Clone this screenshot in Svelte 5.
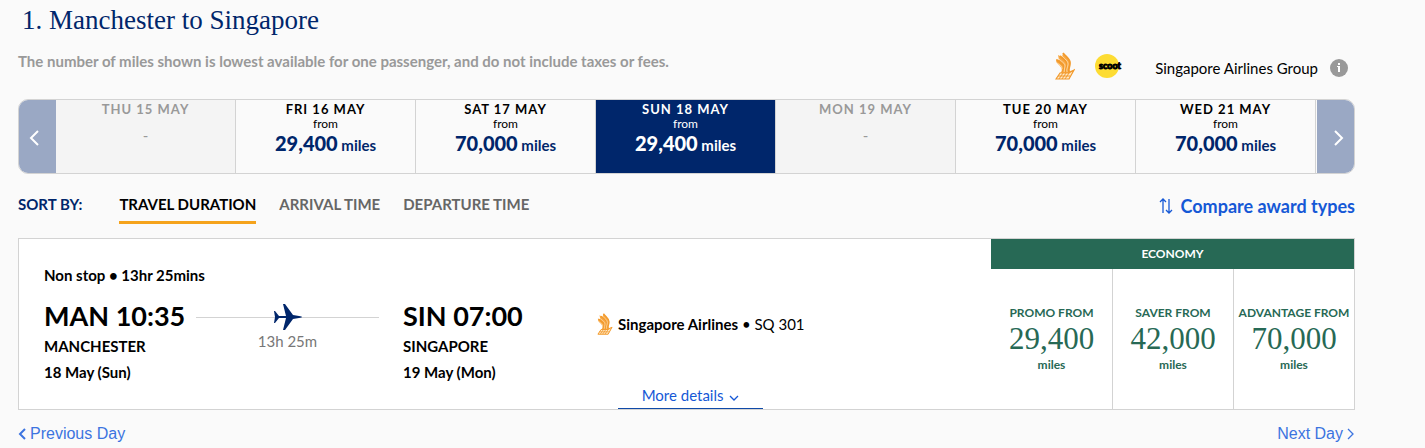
<script>
    let selectedDay = $state(3);
    let sortBy = $state('TRAVEL DURATION');

    const days = [
        { date: 'THU 15 MAY', miles: null },
        { date: 'FRI 16 MAY', miles: '29,400' },
        { date: 'SAT 17 MAY', miles: '70,000' },
        { date: 'SUN 18 MAY', miles: '29,400' },
        { date: 'MON 19 MAY', miles: null },
        { date: 'TUE 20 MAY', miles: '70,000' },
        { date: 'WED 21 MAY', miles: '70,000' }
    ];

    const sortOptions = ['TRAVEL DURATION', 'ARRIVAL TIME', 'DEPARTURE TIME'];

    const fares = [
        { name: 'PROMO FROM', miles: '29,400' },
        { name: 'SAVER FROM', miles: '42,000' },
        { name: 'ADVANTAGE FROM', miles: '70,000' }
    ];
</script>

{#snippet bird()}
    <svg class="bird" viewBox="0 0 20 28" aria-hidden="true">
        <path fill="#f7a845" d="M8 1C11 5 15 7 15 11c0 4-2 6 0 8l4-1-5 9H1l5-7c2-2 0-5-2-7-3-2-3-4-3-6l3 1-1-5 4 2z" />
        <path fill="none" stroke="#f29a2c" stroke-width="1.8" d="M8 1c3 4 7 6 7 10 0 4-2 6-1 9M5 4c4 4 7 5 7 8 0 3-2 5-1 8M2 8c4 4 7 4 7 7 0 2-1 3-1 5" />
        <path fill="none" stroke="#ffe9c8" stroke-width="0.7" d="M7 4c3 3 6 5 6 8s-2 5-1 8M4 7c3 3 6 4 6 7 0 2-1 4-1 6M2 11c3 2 5 3 5 6" />
        <path fill="#ffe9c8" stroke="#f29a2c" stroke-width="1.2" d="M5 21h9l5-3-5 9H1z" />
        <path fill="none" stroke="#f29a2c" stroke-width="1" d="M8 21l-4 6M11 21l-4 6M14 21l-4 6M3 24h12" />
    </svg>
{/snippet}

<main>
    <header>
        <div>
            <h1>1. Manchester to Singapore</h1>
            <p class="note">The number of miles shown is lowest available for one passenger, and do not include taxes or fees.</p>
        </div>
        <div class="group">
            <div class="logos">
                {@render bird()}
                <svg class="scoot" viewBox="0 0 28 24" role="img" aria-label="Scoot">
                    <circle cx="12" cy="12" r="12" fill="#fddc33" />
                    <text x="15" y="15" text-anchor="middle">scoot</text>
                </svg>
            </div>
            <span>Singapore Airlines Group</span>
            <button class="info" aria-label="Information">
                <svg viewBox="0 0 18 18" aria-hidden="true">
                    <circle cx="9" cy="9" r="9" fill="#999" />
                    <path fill="#fff" d="M8 4h2v2H8zM7 7h3v6H8V8H7z" />
                </svg>
            </button>
        </div>
    </header>

    <nav class="days" aria-label="Departure date">
        <button class="arrow" aria-label="Earlier dates">
            <svg viewBox="0 0 10 16" aria-hidden="true"><path d="M9 1L2 8l7 7" /></svg>
        </button>
        {#each days as day, i}
            <button
                class="day"
                class:selected={selectedDay === i}
                disabled={!day.miles}
                onclick={() => (selectedDay = i)}
            >
                <span class="date">{day.date}</span>
                {#if day.miles}
                    <span class="from">from</span>
                    <span class="miles"><strong>{day.miles}</strong> miles</span>
                {:else}
                    <span class="none">-</span>
                {/if}
            </button>
        {/each}
        <button class="arrow next" aria-label="Later dates">
            <svg viewBox="0 0 10 16" aria-hidden="true"><path d="M1 1l7 7-7 7" /></svg>
        </button>
    </nav>

    <div class="sort">
        <span class="sort-label">SORT BY:</span>
        {#each sortOptions as option}
            <button class="sort-option" class:active={sortBy === option} onclick={() => (sortBy = option)}>{option}</button>
        {/each}
        <a class="compare" href="#compare">
            <svg viewBox="0 0 14 16" aria-hidden="true"><path d="M4 15V1M1 4l3-3 3 3M10 1v14M7 12l3 3 3-3" /></svg>
            Compare award types
        </a>
    </div>

    <section class="card">
        <div class="flight">
            <div class="journey">
                <p class="summary">Non stop • 13hr 25mins</p>
                <div class="legs">
                    <div>
                        <div class="time">MAN 10:35</div>
                        <div class="place">MANCHESTER</div>
                        <div class="place">18 May (Sun)</div>
                    </div>
                    <div class="duration">
                        <div class="line">
                            <svg viewBox="0 0 28 26" aria-hidden="true">
                                <path fill="#00266b" d="M0 7h1l4 5h7L9 0h2l8 11 6 1c2 0 3 1 3 1s-1 1-3 1l-6 1-8 11H9l3-12H5l-4 5H0l1-6z" />
                            </svg>
                        </div>
                        <span>13h 25m</span>
                    </div>
                    <div>
                        <div class="time">SIN 07:00</div>
                        <div class="place">SINGAPORE</div>
                        <div class="place">19 May (Mon)</div>
                    </div>
                </div>
            </div>
            <div class="carrier">
                <p>{@render bird()}<span><strong>Singapore Airlines</strong> • SQ 301</span></p>
                <button class="details">
                    More details
                    <svg viewBox="0 0 10 6" aria-hidden="true"><path d="M1 1l4 4 4-4" /></svg>
                </button>
            </div>
        </div>
        <div class="fares">
            <h2>ECONOMY</h2>
            {#each fares as fare}
                <button class="fare">
                    <span>{fare.name}</span>
                    <span class="amount">{fare.miles}</span>
                    <span>miles</span>
                </button>
            {/each}
        </div>
    </section>

    <footer>
        <a href="#previous"><svg viewBox="0 0 8 12" aria-hidden="true"><path d="M7 1L2 6l5 5" /></svg>Previous Day</a>
        <a href="#next">Next Day<svg class="thin" viewBox="0 0 8 12" aria-hidden="true"><path d="M1 1l5 5-5 5" /></svg></a>
    </footer>
</main>

<style>
    :global(body) {
        background: #fafafa;
    }

    main {
        padding: 0 70px 0 18px;
        font-family: Lato, sans-serif;
        font-size: 15px;
        line-height: 20px;
        color: #000;
    }

    h1, h2, p {
        margin: 0;
    }

    button {
        padding: 0;
        border: 0;
        background: none;
        font: inherit;
        color: inherit;
        cursor: pointer;
    }

    a {
        color: #1558d6;
        text-decoration: none;
    }

    svg {
        flex: none;
    }

    svg path:not([fill]) {
        fill: none;
        stroke: currentColor;
        stroke-width: 2;
    }

    header {
        display: flex;
        justify-content: space-between;
        align-items: flex-end;
        height: 84px;
        margin-bottom: 15px;
    }

    h1 {
        margin-bottom: 11px;
        padding-left: 4px;
        font: 27px/40px "Liberation Serif", serif;
        color: #00266b;
    }

    .note {
        margin-bottom: 13px;
        font-weight: bold;
        color: #999;
    }

    .group {
        display: flex;
        align-items: center;
        padding-right: 7px;
    }

    .logos {
        display: flex;
        align-items: center;
        gap: 20px;
        margin-right: 32px;
        padding-bottom: 4px;
    }

    .bird {
        width: 20px;
        height: 28px;
    }

    .scoot {
        width: 28px;
        height: 24px;
    }

    .scoot text {
        font: bold 9px Lato, sans-serif;
        stroke: #000;
    }

    .info {
        display: flex;
        margin-left: 12px;
    }

    .info svg {
        width: 18px;
        height: 18px;
    }

    .days {
        display: flex;
        height: 73px;
        border: 1px solid #d3d3d3;
        border-radius: 10px;
        overflow: hidden;
    }

    .arrow {
        width: 37px;
        padding: 6px 8px 0 0;
        background: #9aa8c4;
        color: #fff;
    }

    .arrow svg {
        width: 10px;
        height: 16px;
    }

    .arrow.next {
        margin-left: 1px;
        padding: 6px 0 0 6px;
    }

    .day {
        display: flex;
        flex: 1;
        flex-direction: column;
        align-items: center;
        padding-top: 1px;
        border-right: 1px solid #d3d3d3;
    }

    .day:disabled {
        background: #f4f4f4;
        color: #999;
        cursor: default;
    }

    .day.selected {
        background: #00266b;
        color: #fff;
    }

    .date {
        font-weight: bold;
        font-size: 13px;
        line-height: 16px;
        letter-spacing: 1px;
    }

    .from {
        font-size: 12px;
        line-height: 14px;
    }

    .miles {
        font-weight: bold;
        line-height: 24px;
        color: #00266b;
    }

    .miles strong {
        font-size: 20px;
    }

    .selected .miles {
        color: #fff;
    }

    .none {
        line-height: 36px;
    }

    .sort {
        display: flex;
        align-items: flex-start;
        padding-top: 20px;
        font-weight: bold;
    }

    .sort-label {
        margin-right: 37px;
        color: #00266b;
    }

    .sort-option {
        margin-right: 23px;
        padding-bottom: 7px;
        border-bottom: 3px solid transparent;
        color: #666;
    }

    .sort-option.active {
        border-color: #f5a31c;
        color: #000;
    }

    .compare {
        display: flex;
        align-items: center;
        gap: 8px;
        margin: 2px 0 0 auto;
        font-size: 18px;
    }

    .compare svg {
        width: 14px;
        height: 16px;
    }

    .compare svg path:not([fill]),
    .details svg path:not([fill]),
    .thin path:not([fill]) {
        stroke-width: 1.3;
    }

    .card {
        display: flex;
        margin-top: 14px;
        border: 1px solid #d3d3d3;
        background: #fff;
    }

    .flight {
        display: grid;
        flex: 1;
        grid-template-columns: 553fr 394fr;
        padding-left: 25px;
    }

    .summary {
        padding-top: 26px;
        font-weight: bold;
    }

    .legs {
        display: grid;
        grid-template-columns: 137px 222px auto;
        padding: 14px 0 24px;
        font-weight: bold;
    }

    .time {
        font-size: 27px;
        line-height: 34px;
        white-space: nowrap;
    }

    .place {
        line-height: 26px;
    }

    .duration {
        padding: 4px 24px 0 15px;
        text-align: center;
        font-weight: normal;
        color: #777;
    }

    .line {
        display: flex;
        align-items: center;
        justify-content: center;
        height: 28px;
        background: linear-gradient(#d3d3d3, #d3d3d3) center / 100% 1px no-repeat;
    }

    .line svg {
        width: 28px;
        height: 26px;
    }

    .carrier {
        display: flex;
        flex-direction: column;
        justify-content: space-between;
        align-items: flex-start;
        padding-top: 74px;
    }

    .carrier p {
        display: flex;
        align-items: center;
        gap: 5px;
    }

    .carrier .bird {
        width: 16px;
        height: 22px;
    }

    .details {
        width: 145px;
        margin-left: 21px;
        padding-bottom: 3px;
        border-bottom: 1px solid #0f4aa8;
        color: #1558d6;
    }

    .details svg {
        width: 10px;
        height: 6px;
        margin-left: 2px;
    }

    .fares {
        display: grid;
        grid-template-columns: repeat(3, 121px);
        grid-template-rows: 30px 1fr;
        color: #276955;
    }

    h2 {
        grid-column: 1 / -1;
        background: #276955;
        font-size: 12px;
        line-height: 30px;
        text-align: center;
        color: #fff;
    }

    .fare {
        display: flex;
        flex-direction: column;
        justify-content: center;
        align-items: center;
        font-weight: bold;
        font-size: 12px;
        line-height: 18px;
        white-space: nowrap;
    }

    .fare + .fare {
        border-left: 1px solid #d3d3d3;
    }

    .amount {
        font: 31px/34px "Liberation Serif", serif;
    }

    footer {
        display: flex;
        justify-content: space-between;
        padding: 14px 0 4px;
        font-family: "Liberation Sans", sans-serif;
        font-size: 16px;
    }

    footer a {
        display: flex;
        align-items: center;
        gap: 4px;
        color: #3c74e0;
    }

    footer svg {
        width: 8px;
        height: 12px;
    }
</style>
